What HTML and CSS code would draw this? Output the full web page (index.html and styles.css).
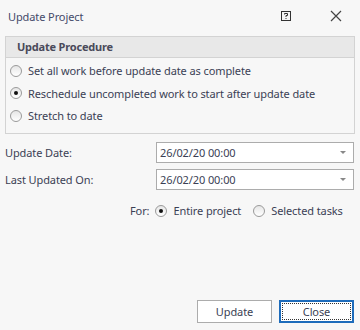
FILE: index.html
```html
<!DOCTYPE html>
<html lang="en">
<head>
    <meta charset="UTF-8">
    <title>Update Project</title>
    <link rel="stylesheet" href="styles.css">
</head>
<body>
    <div class="dialog">
        <div class="titlebar">
            <span class="title">Update Project</span>
            <span class="help-btn">
                <svg width="10" height="10" viewBox="0 0 10 10">
                    <rect x="0.5" y="0.5" width="9" height="9" fill="none" stroke="#333" stroke-width="1"/>
                    <path d="M3.5 3.5 V2.5 H6.5 V4.5 H5 V6" fill="none" stroke="#333" stroke-width="1"/>
                    <rect x="4.5" y="7" width="1" height="1" fill="#333"/>
                </svg>
            </span>
            <span class="close-btn">
                <svg width="12" height="12" viewBox="0 0 12 12">
                    <path d="M1 1 L11 11 M11 1 L1 11" stroke="#444" stroke-width="1.2"/>
                </svg>
            </span>
        </div>

        <div class="group">
            <div class="group-head">Update Procedure</div>
            <div class="options">
                <label class="radio-row"><span class="radio"></span>Set all work before update date as complete</label>
                <label class="radio-row"><span class="radio checked"></span>Reschedule uncompleted work to start after update date</label>
                <label class="radio-row"><span class="radio"></span>Stretch to date</label>
            </div>
        </div>

        <div class="fields">
            <div class="field">
                <span class="field-label">Update Date:</span>
                <div class="combo"><span>26/02/20 00:00</span><span class="arrow"></span></div>
            </div>
            <div class="field">
                <span class="field-label">Last Updated On:</span>
                <div class="combo"><span>26/02/20 00:00</span><span class="arrow"></span></div>
            </div>
        </div>

        <div class="for-row">
            <span class="for-label">For:</span>
            <label class="radio-row"><span class="radio checked"></span>Entire project</label>
            <label class="radio-row"><span class="radio"></span>Selected tasks</label>
        </div>

        <div class="buttons">
            <button class="btn">Update</button>
            <button class="btn focused"><span>Close</span></button>
        </div>
    </div>
</body>
</html>
```

FILE: styles.css
```css
body {
    margin: 0;
    background-color: #f7f7f7;
    font-family: "Noto Sans", "Open Sans", sans-serif;
    font-size: 11px;
    letter-spacing: -0.1px;
    color: #3b3f55;
}
.dialog {
    width: 360px;
    height: 330px;
    display: flex;
    flex-direction: column;
}
.titlebar {
    height: 32px;
    display: flex;
    align-items: center;
    padding-left: 8px;
}
.title {
    flex: 1;
    color: #454a6a;
}
.help-btn {
    width: 10px;
    height: 10px;
    margin-right: 39px;
    display: flex;
}
.close-btn {
    width: 12px;
    height: 12px;
    margin-right: 18px;
    display: flex;
}
.group {
    margin: 4px 5px 0 5px;
    border: 1px solid #d3d3d3;
    height: 96px;
}
.group-head {
    height: 20px;
    line-height: 20px;
    background-color: #e8e8e8;
    border-bottom: 1px solid #d3d3d3;
    padding-left: 11px;
    font-weight: bold;
    letter-spacing: -0.2px;
    color: #4a4a5a;
}
.options {
    display: flex;
    flex-direction: column;
    gap: 5.5px;
    padding: 4px 0 0 4px;
}
.radio-row {
    display: flex;
    align-items: center;
    height: 17px;
    white-space: nowrap;
}
.radio {
    width: 10px;
    height: 10px;
    border: 1px solid #9a9a9a;
    border-radius: 50%;
    background: linear-gradient(#e6e6e6, #ffffff);
    margin-right: 6px;
    position: relative;
    flex-shrink: 0;
}
.radio.checked::after {
    content: "";
    position: absolute;
    left: 3px;
    top: 3px;
    width: 4px;
    height: 4px;
    border-radius: 50%;
    background-color: #111;
}
.fields {
    display: flex;
    flex-direction: column;
    gap: 6px;
    margin: 8px 6px 0 5px;
}
.field {
    display: flex;
    align-items: center;
}
.field-label {
    width: 151px;
}
.combo {
    flex: 1;
    height: 19px;
    border: 1px solid #acacac;
    background-color: #fff;
    display: flex;
    align-items: center;
    justify-content: space-between;
    padding: 0 7px 0 3px;
}
.arrow {
    width: 0;
    height: 0;
    border-left: 3px solid transparent;
    border-right: 3px solid transparent;
    border-top: 3px solid #888;
}
.for-row {
    display: flex;
    align-items: center;
    gap: 6px;
    margin: 12px 0 0 130px;
}
.for-row .radio-row {
    margin-right: 6px;
}
.buttons {
    margin-top: auto;
    display: flex;
    justify-content: flex-end;
    gap: 7px;
    padding: 0 6px 7px 0;
}
.btn {
    width: 75px;
    height: 23px;
    background-color: #fff;
    border: 1px solid #acacac;
    font-family: inherit;
    font-size: 11px;
    letter-spacing: -0.1px;
    color: #3b3f55;
    padding: 0;
}
.btn.focused {
    border: 2px solid #1e6cbb;
    padding: 1px;
}
.btn.focused span {
    display: flex;
    align-items: center;
    justify-content: center;
    height: 100%;
    outline: 1px dotted #333;
    outline-offset: -1px;
}
```
